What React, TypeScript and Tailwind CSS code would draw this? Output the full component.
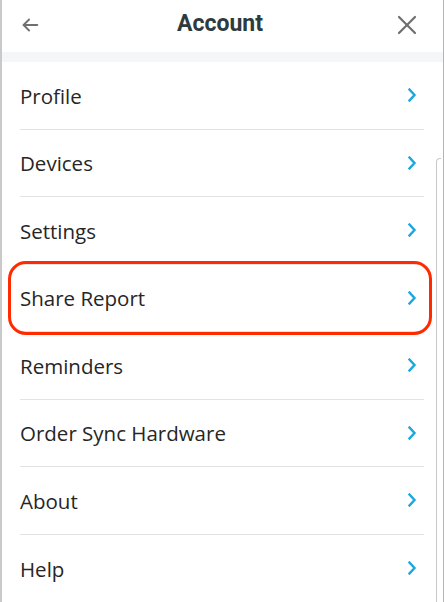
import React from 'react';

const items = [
  'Profile',
  'Devices',
  'Settings',
  'Share Report',
  'Reminders',
  'Order Sync Hardware',
  'About',
  'Help',
];

function Chevron() {
  return (
    <svg width="10" height="14" viewBox="0 0 10 14" fill="none">
      <path d="M2.5 1.5 L7.5 7 L2.5 12.5" stroke="#1ba8df" strokeWidth="2.4" strokeLinecap="square" />
    </svg>
  );
}

export default function App() {
  return (
    <div className="w-[444px] h-[602px] overflow-hidden bg-white border-l-2 border-r border-l-[#c9c9c9] border-r-[#b5b5b5] relative">
      {/* Header */}
      <div className="h-[52px] flex items-center justify-between pl-[17px] pr-[24px] pb-[3px]">
        <svg width="22" height="22" viewBox="0 0 24 24" fill="none" stroke="#707070" strokeWidth="2" strokeLinecap="round" strokeLinejoin="round">
          <path d="M20 12H5" />
          <path d="M11 6l-6 6 6 6" />
        </svg>
        <h1
          className="text-[23px] font-bold text-[#2d3a40] pl-[4px]"
          style={{ fontFamily: 'Roboto, "Liberation Sans", sans-serif' }}
        >
          Account
        </h1>
        <svg width="24" height="24" viewBox="0 0 24 24" fill="none" stroke="#6f6f6f" strokeWidth="2.2" strokeLinecap="round">
          <path d="M4 4l16 16" />
          <path d="M20 4L4 20" />
        </svg>
      </div>
      <div className="h-[10px] bg-[#f5f6f7]" />

      {/* List */}
      <ul style={{ fontFamily: '"Open Sans", Lato, sans-serif' }}>
        {items.map((label, i) => (
          <li key={label} className="relative">
            <div
              className={`h-[67.5px] ml-[18px] mr-[19px] flex items-center justify-between pr-[7px] ${
                i < items.length - 1 ? 'border-b border-[#e3e3e3]' : ''
              }`}
            >
              <span className="text-[20.5px] text-[#262626] pt-[2px]">{label}</span>
              <Chevron />
            </div>
            {label === 'Share Report' && (
              <div className="absolute left-[6px] right-[11px] top-[-4px] bottom-[-3px] border-[3px] border-[#ff2a00] rounded-[18px]" />
            )}
          </li>
        ))}
      </ul>

      {/* device edge */}
      <div className="absolute right-[2px] top-[158px] w-[5px] h-[460px] border border-[#c8c8c8] rounded-tl-[4px] border-r-0" />
    </div>
  );
}
